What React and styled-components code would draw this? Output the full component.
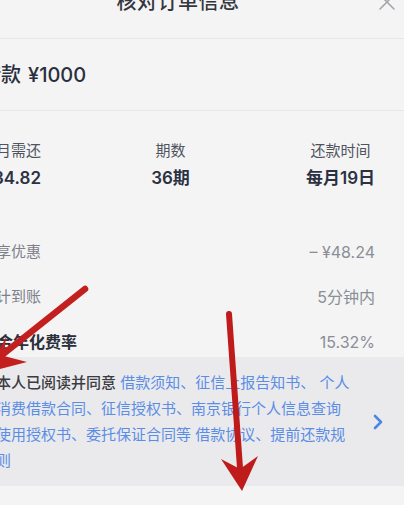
import React from "react";
import styled, { createGlobalStyle } from "styled-components";

const GlobalStyle = createGlobalStyle`
  html, body {
    margin: 0;
    padding: 0;
    background: #f4f4f5;
    overflow: hidden;
  }
  body {
    font-family: Inter, "Noto Sans CJK SC", sans-serif;
  }
`;

const Viewport = styled.div`
  position: relative;
  width: 404px;
  height: 505px;
  overflow: hidden;
`;

const Sheet = styled.div`
  width: 452px;
  margin-left: -48px;
  margin-top: -10px;
`;

const Header = styled.header`
  display: grid;
  grid-template-columns: 1fr auto 1fr;
  align-items: center;
  height: 24px;
  padding-bottom: 24px;
  border-bottom: 1px solid #e7e7e9;
`;

const Title = styled.h1`
  grid-column: 2;
  margin: 0;
  font-size: 20px;
  line-height: 24px;
  font-weight: 500;
  color: #33363d;
  letter-spacing: 0.5px;
`;

const CloseBtn = styled.button`
  grid-column: 3;
  justify-self: end;
  margin-right: 8px;
  width: 18px;
  height: 18px;
  padding: 0;
  border: none;
  background: none;
  display: flex;
  color: #a3a5aa;
`;

const AmountSection = styled.section`
  padding: 22px 29px 21px;
  border-bottom: 1px solid #e7e7e9;
  font-size: 20px;
  line-height: 28px;
  font-weight: 500;
  color: #2a2f3d;
`;

const Yen = styled.span`
  margin-left: 7px;
`;

const Details = styled.section`
  padding: 30px 29px 4px;
`;

const Stats = styled.div`
  display: flex;
  justify-content: space-between;
`;

const Stat = styled.div`
  display: flex;
  flex-direction: column;
  align-items: ${(p) => p.$align || "center"};
  gap: 5px;
  margin-left: ${(p) => p.$shift || 0}px;
`;

const StatLabel = styled.span`
  font-size: 15px;
  line-height: 20px;
  color: #50545e;
`;

const StatValue = styled.span`
  font-size: 17px;
  line-height: 24px;
  font-weight: 600;
  color: #2b3142;
`;

const Rows = styled.div`
  margin-top: 51px;
  display: flex;
  flex-direction: column;
  gap: 23px;
`;

const Row = styled.div`
  display: flex;
  justify-content: space-between;
  align-items: center;
  font-size: ${(p) => (p.$strong ? 16 : 15)}px;
  line-height: 22px;
`;

const RowLabel = styled.span`
  color: ${(p) => (p.$strong ? "#2b2f3a" : "#7d8088")};
  font-weight: ${(p) => (p.$strong ? 700 : 400)};
`;

const RowValue = styled.span`
  font-size: 16px;
  color: #8b8e95;
`;

const Agreement = styled.section`
  display: flex;
  align-items: center;
  justify-content: space-between;
  background: #eaeaec;
  padding: 13px 19px 12px 44px;
`;

const AgreementText = styled.p`
  margin: 0;
  width: 357px;
  font-size: 15px;
  line-height: 26px;
  color: #5b8de6;
`;

const Lead = styled.span`
  color: #3a3c42;
  font-weight: 500;
`;

const Chevron = styled.svg`
  width: 14px;
  height: 16px;
  flex: none;
`;

const Arrows = styled.svg`
  position: absolute;
  left: 0;
  top: 0;
  width: 404px;
  height: 505px;
  pointer-events: none;
`;

export default function App() {
  return (
    <>
      <GlobalStyle />
      <Viewport>
        <Sheet>
          <Header>
            <Title>核对订单信息</Title>
            <CloseBtn aria-label="关闭">
              <svg width="18" height="18" viewBox="0 0 18 18">
                <path d="M2 2 L16 16 M16 2 L2 16" stroke="currentColor" strokeWidth="1.6" strokeLinecap="round" />
              </svg>
            </CloseBtn>
          </Header>

          <AmountSection>
            借款<Yen>¥1000</Yen>
          </AmountSection>

          <Details>
            <Stats>
              <Stat $align="flex-end">
                <StatLabel>每月需还</StatLabel>
                <StatValue>¥34.82</StatValue>
              </Stat>
              <Stat $shift={-6}>
                <StatLabel>期数</StatLabel>
                <StatValue>36期</StatValue>
              </Stat>
              <Stat>
                <StatLabel>还款时间</StatLabel>
                <StatValue>每月19日</StatValue>
              </Stat>
            </Stats>

            <Rows>
              <Row>
                <RowLabel>已享优惠</RowLabel>
                <RowValue>–&nbsp;¥48.24</RowValue>
              </Row>
              <Row>
                <RowLabel>预计到账</RowLabel>
                <RowValue>5分钟内</RowValue>
              </Row>
              <Row $strong>
                <RowLabel $strong>综合年化费率</RowLabel>
                <RowValue>15.32%</RowValue>
              </Row>
            </Rows>
          </Details>

          <Agreement>
            <AgreementText>
              <Lead>本人已阅读并同意</Lead> 借款须知、征信上报告知书、 个人消费借款合同、征信授权书、南京银行个人信息查询使用授权书、委托保证合同等 借款协议、提前还款规则
            </AgreementText>
            <Chevron viewBox="0 0 14 16">
              <path d="M4 2 L10 8 L4 14" fill="none" stroke="#4f86e4" strokeWidth="2.6" strokeLinecap="round" strokeLinejoin="round" />
            </Chevron>
          </Agreement>
        </Sheet>

        <Arrows viewBox="0 0 404 505">
          <line x1="85" y1="289" x2="2" y2="355" stroke="#c41f1f" strokeWidth="6.5" strokeLinecap="round" />
          <polygon points="-12,372 6,337 4,356 27,362" fill="#c41f1f" />
          <line x1="229" y1="314" x2="240" y2="468" stroke="#bf1b1b" strokeWidth="6" strokeLinecap="round" />
          <polygon points="242,491 221,459 240,469 258,456" fill="#bf1b1b" />
        </Arrows>
      </Viewport>
    </>
  );
}
